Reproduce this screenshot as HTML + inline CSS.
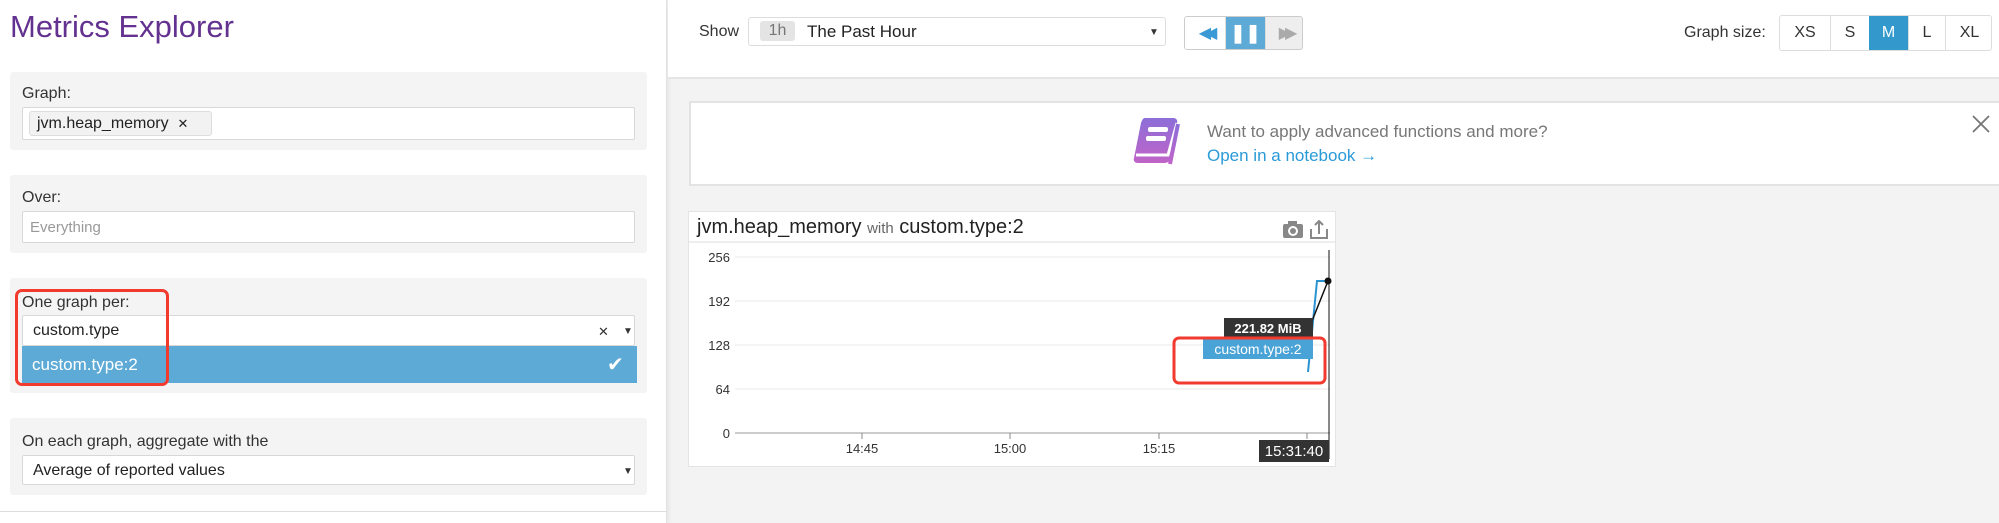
<!DOCTYPE html>
<html><head><meta charset="utf-8"><style>
*{box-sizing:border-box;margin:0;padding:0}
body{width:1999px;height:523px;overflow:hidden;background:#f3f3f3;font-family:"Liberation Sans",sans-serif;position:relative;color:#333}
.a{position:absolute}
.left{left:0;top:0;width:667px;height:523px;background:#fff;border-right:1px solid #e2e2e2;box-shadow:2px 0 4px rgba(0,0,0,.06)}
.box{position:absolute;left:10px;width:637px;background:#f4f4f4;border-radius:3px}
.lbl{position:absolute;left:12px;font-size:16px;color:#333}
.inp{position:absolute;left:12px;width:613px;background:#fff;border:1px solid #d8d8d8;border-radius:2px}
.btn{position:absolute;top:0;height:100%;display:flex;align-items:center;justify-content:center;font-size:16px;color:#333;border-left:1px solid #ddd}
.arr{position:absolute;left:600px;font-size:10px}
</style></head><body>
<div class="a left">
  <div class="a" style="left:10px;top:9px;font-size:31px;color:#63318f">Metrics Explorer</div>
  <div class="box" style="top:72px;height:78px">
    <div class="lbl" style="top:13px">Graph:</div>
    <div class="inp" style="top:35px;height:33px">
      <div class="a" style="left:6px;top:3px;width:183px;height:25px;background:#f2f2f2;border:1px solid #ddd;border-radius:3px;font-size:16px;padding:3px 0 0 7px;color:#222">jvm.heap_memory &nbsp;<span style="font-size:13px">✕</span></div>
    </div>
  </div>
  <div class="box" style="top:175px;height:78px">
    <div class="lbl" style="top:14px">Over:</div>
    <div class="inp" style="top:36px;height:32px"><div class="a" style="left:7px;top:7px;font-size:15px;color:#999">Everything</div></div>
  </div>
  <div class="box" style="top:278px;height:115px">
    <div class="lbl" style="top:16px">One graph per:</div>
    <div class="inp" style="top:37px;height:31px"><div class="a" style="left:10px;top:6px;font-size:16px;color:#222">custom.type</div>
      <div class="a" style="left:575px;top:8px;font-size:13px">✕</div><div class="arr" style="top:10px">▼</div></div>
    <div class="a" style="left:12px;top:68px;width:615px;height:37px;background:#5eaad6;color:#fff">
      <div class="a" style="left:10px;top:9px;font-size:17px">custom.type:2</div>
      <div class="a" style="left:585px;top:6px;font-size:20px">✔</div></div>
  </div>
  <div class="a" style="left:15px;top:289px;width:154px;height:97px;border:3px solid #f23a2f;border-radius:7px"></div>
  <div class="box" style="top:418px;height:77px">
    <div class="lbl" style="top:15px">On each graph, aggregate with the</div>
    <div class="inp" style="top:37px;height:30px"><div class="a" style="left:10px;top:6px;font-size:16px;color:#222">Average of reported values</div><div class="arr" style="top:10px">▼</div></div>
  </div>
  <div class="a" style="left:0;top:511px;width:667px;height:1px;background:#ddd"></div>
</div>
<div class="a" style="left:668px;top:0;width:1331px;height:79px;background:#fff;border-bottom:2px solid #e5e5e5"></div>
<div class="a" style="left:699px;top:23px;font-size:16px">Show</div>
<div class="a" style="left:748px;top:17px;width:418px;height:29px;background:#fff;border:1px solid #ddd;border-radius:3px">
  <div class="a" style="left:11px;top:3px;width:35px;height:20px;background:#e4e4e4;border-radius:3px;font-size:16px;color:#777;text-align:center;padding-top:1px">1h</div>
  <div class="a" style="left:58px;top:4px;font-size:17px;color:#222">The Past Hour</div>
  <div class="a" style="left:400px;top:9px;font-size:10px">▼</div>
</div>
<div class="a" style="left:1184px;top:16px;width:119px;height:34px;border:1px solid #ccc;border-radius:3px;overflow:hidden;background:#eee">
  <div class="btn" style="left:0;width:40px;background:#fff;border:0;color:#3a9ad6;font-size:16px;letter-spacing:-6px">◀◀</div>
  <div class="btn" style="left:40px;width:40px;background:#5eaad6;color:#fff;font-weight:bold;font-size:18px">❚❚</div>
  <div class="btn" style="left:80px;width:39px;color:#aaa;letter-spacing:-6px;font-size:16px">▶▶</div>
</div>
<div class="a" style="left:1684px;top:24px;font-size:16px">Graph size:</div>
<div class="a" style="left:1779px;top:15px;width:213px;height:36px;border:1px solid #ddd;border-radius:3px;background:#fff;overflow:hidden">
  <div class="btn" style="left:0;width:50px;border:0">XS</div>
  <div class="btn" style="left:50px;width:39px">S</div>
  <div class="btn" style="left:89px;width:39px;background:#3399cc;color:#fff;border:0">M</div>
  <div class="btn" style="left:128px;width:37px">L</div>
  <div class="btn" style="left:165px;width:48px">XL</div>
</div>
<div class="a" style="left:689px;top:101px;width:1312px;height:85px;background:#fff;border:2px solid #e3e3e3;border-right:0"></div>
<svg class="a" style="left:1131px;top:115px" width="56" height="52" viewBox="0 0 56 52"><defs><linearGradient id="g" x1="0" y1="0" x2="0" y2="1"><stop offset="0" stop-color="#8d6ed8"/><stop offset="1" stop-color="#c064c8"/></linearGradient></defs>
<path d="M14 3h28c3 0 5 2 4 5l-7 36c-1 3-3 4-6 4H7c-3 0-5-2-4-5L10 8c1-3 2-5 4-5z" fill="url(#g)"/><path d="M5 40h32l9-32" stroke="#fff" stroke-width="3" fill="none"/><path d="M47 9l-8 40" stroke="url(#g)" stroke-width="4"/><rect x="17" y="12" width="20" height="5" rx="2" fill="#fff"/><rect x="15" y="21" width="20" height="5" rx="2" fill="#fff"/></svg>
<div class="a" style="left:1207px;top:122px;font-size:17px;color:#777">Want to apply advanced functions and more?</div>
<div class="a" style="left:1207px;top:146px;font-size:17px;color:#2a9ad8">Open in a notebook →</div>
<svg class="a" style="left:1971px;top:114px" width="20" height="20"><path d="M2 2L18 18M18 2L2 18" stroke="#777" stroke-width="1.8"/></svg>
<div class="a" style="left:688px;top:211px;width:648px;height:256px;background:#fff;border:1px solid #e4e4e4">
  <div class="a" style="left:0;top:0;width:646px;height:31px;border-bottom:2px solid #eee"></div>
  <div class="a" style="left:8px;top:4px;font-size:20px;color:#222">jvm.heap_memory <span style="font-size:15px;color:#666">with</span> custom.type:2</div>
  <svg class="a" style="left:592px;top:8px" width="50" height="20"><rect x="2" y="4" width="20" height="14" rx="2" fill="#888"/><rect x="7" y="1" width="9" height="4" fill="#888"/><circle cx="12" cy="11" r="4" fill="none" stroke="#fff" stroke-width="2"/><path d="M30 9v9h16v-9M38 14V1M34 5l4-4 4 4" stroke="#888" stroke-width="2" fill="none"/></svg>
</div>
<svg class="a" style="left:688px;top:211px" width="660" height="260" font-family="Liberation Sans" font-size="13" fill="#333">
  <g stroke="#e8e8e8"><line x1="47" y1="46" x2="642" y2="46"/><line x1="47" y1="90" x2="642" y2="90"/><line x1="47" y1="134" x2="642" y2="134"/><line x1="47" y1="178" x2="642" y2="178"/></g>
  <line x1="47" y1="222" x2="642" y2="222" stroke="#999"/>
  <g text-anchor="end"><text x="42" y="51">256</text><text x="42" y="95">192</text><text x="42" y="139">128</text><text x="42" y="183">64</text><text x="42" y="227">0</text></g>
  <g stroke="#888"><line x1="174" y1="222" x2="174" y2="228"/><line x1="322" y1="222" x2="322" y2="228"/><line x1="471" y1="222" x2="471" y2="228"/><line x1="619" y1="222" x2="619" y2="228"/></g>
  <g text-anchor="middle"><text x="174" y="242">14:45</text><text x="322" y="242">15:00</text><text x="471" y="242">15:15</text></g>
  <line x1="641" y1="39" x2="641" y2="248" stroke="#111"/>
  <path d="M620 161L629 70L640 70" stroke="#2b93d1" stroke-width="2" fill="none"/>
  <path d="M624 110L640 70" stroke="#111" stroke-width="1.5" fill="none"/>
  <circle cx="640" cy="70" r="3.5" fill="#111"/>
  <rect x="536" y="107" width="89" height="20" fill="#333"/><text x="580" y="122" text-anchor="middle" fill="#fff" font-weight="bold" font-size="13">221.82 MiB</text>
  <rect x="515" y="128" width="110" height="20" fill="#4aa3d6"/><text x="570" y="143" text-anchor="middle" fill="#fff" font-size="14">custom.type:2</text>
  <rect x="486" y="127" width="151" height="45" rx="5" fill="none" stroke="#f23a2f" stroke-width="3"/>
  <rect x="571" y="229" width="70" height="22" fill="#333"/><text x="606" y="245" text-anchor="middle" fill="#fff" font-size="15">15:31:40</text>
</svg>
</body></html>
